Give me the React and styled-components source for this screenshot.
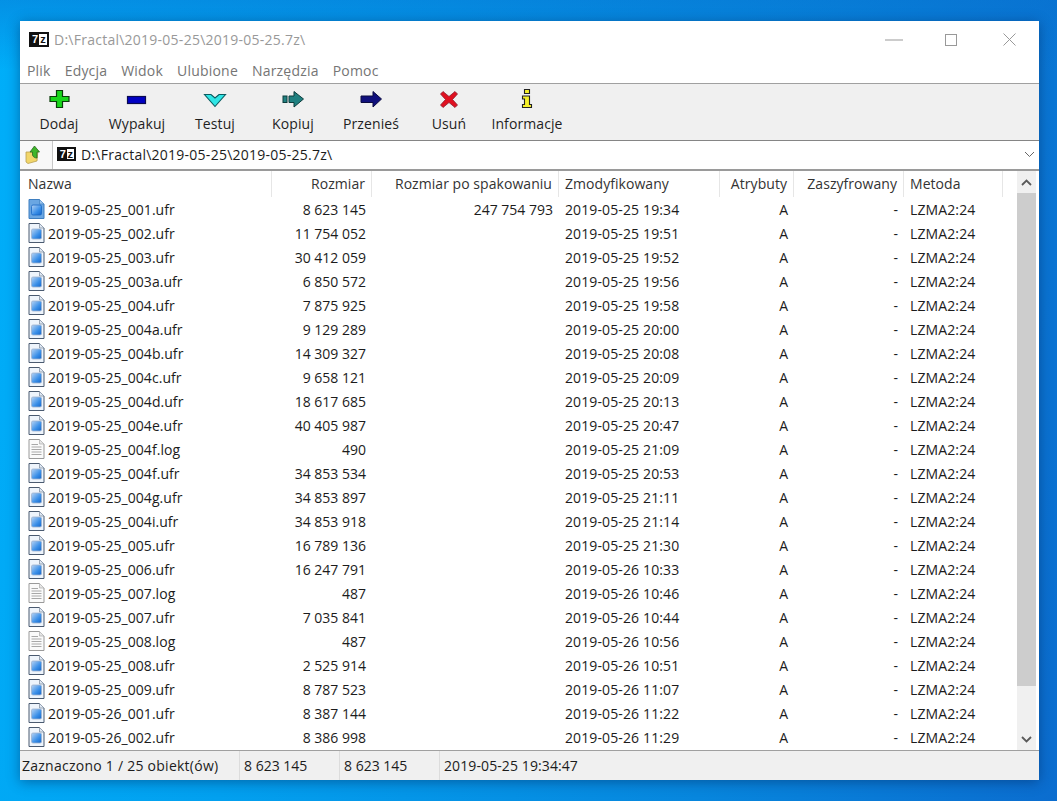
import React from 'react';
import styled, { createGlobalStyle } from 'styled-components';

const GlobalStyle = createGlobalStyle`
  html, body {
    margin: 0;
    padding: 0;
  }
  body {
    font-family: "Open Sans", "Noto Sans", sans-serif;
    font-size: 14px;
    color: #1c1c1c;
  }
`;

const COLUMNS = '252px 100px 187px 161px 74px 110px 99px 14px';

const Desktop = styled.div`
  box-sizing: border-box;
  width: 1057px;
  height: 801px;
  overflow: hidden;
  padding: 21px 18px 21px 20px;
  background:
    linear-gradient(180deg, rgba(8, 110, 205, 0.45) 0, rgba(8, 110, 205, 0) 70px),
    linear-gradient(100deg, #00aef9 0%, #02a0ef 30%, #0786dd 70%, #0b6dcf 100%);
`;

const Window = styled.div`
  display: flex;
  flex-direction: column;
  height: 759px;
  background: #fff;
  box-shadow: 0 2px 12px rgba(0, 30, 80, 0.45);
`;

const TitleBar = styled.div`
  display: flex;
  align-items: center;
  height: 37px;
  padding-left: 9px;
  color: #999;
`;

const Title = styled.span`
  margin-left: 5px;
  flex: 1;
  letter-spacing: 0.25px;
`;

const LogoBox = styled.span`
  box-sizing: border-box;
  display: inline-flex;
  flex: none;
  width: ${p => (p.$small ? '19px' : '20px')};
  height: ${p => (p.$small ? '14px' : '15px')};
  background: #fff;
  border: 2px solid #111;
  font-family: "Liberation Sans", sans-serif;
  font-size: 11px;
  font-weight: 700;
  line-height: 11px;
  color: #111;
`;

const LogoSeven = styled.span`
  width: 8px;
  background: #111;
  color: #fff;
  text-align: center;
`;

const LogoZed = styled.span`
  width: 8px;
  text-align: center;
`;

const WindowButton = styled.div`
  display: flex;
  align-items: center;
  justify-content: center;
  width: ${p => (p.$narrow ? '56px' : '58px')};
  height: 37px;
`;

const WindowButtons = styled.div`
  display: flex;
  margin-right: 1px;
`;

const MenuBar = styled.div`
  display: flex;
  align-items: center;
  gap: 14px;
  height: 25px;
  padding: 0 0 0 7px;
  color: #757575;
  letter-spacing: 0.2px;
  border-bottom: 1px solid #a0a0a0;
`;

const Toolbar = styled.div`
  display: flex;
  height: 56px;
  background: #f0f0f0;
  border-bottom: 1px solid #858585;
`;

const ToolButton = styled.div`
  display: flex;
  flex-direction: column;
  align-items: center;
  width: 78px;
  padding-top: 5px;
  color: #1f1f1f;
`;

const ToolIcon = styled.svg`
  display: block;
  width: 24px;
  height: 20px;
`;

const ToolLabel = styled.span`
  margin-top: 5px;
  line-height: 20px;
  letter-spacing: 0.1px;
`;

const AddressRow = styled.div`
  display: flex;
  align-items: stretch;
  height: 28px;
  border-bottom: 2px solid #9a9a9a;
  background: #f8f8f8;
`;

const UpButton = styled.div`
  box-sizing: border-box;
  display: flex;
  align-items: center;
  width: 32px;
  padding: 0 0 2px 5px;
`;

const AddressBox = styled.div`
  flex: 1;
  display: flex;
  align-items: center;
  gap: 5px;
  padding: 0 0 2px 4px;
  background: #fff;
  border-left: 1px solid #c8c8c8;
`;

const AddressText = styled.span`
  flex: 1;
  letter-spacing: 0.25px;
`;

const DropArrow = styled.svg`
  width: 11px;
  height: 7px;
  margin-right: 4px;
`;

const ListArea = styled.div`
  display: flex;
  height: 579px;
  overflow: hidden;
  padding-right: 3px;
`;

const ListBody = styled.div`
  flex: 1;
  min-width: 0;
`;

const HeaderRow = styled.div`
  display: grid;
  grid-template-columns: ${COLUMNS};
  height: 26px;
  color: #333;
`;

const HeaderCell = styled.div`
  box-sizing: border-box;
  display: flex;
  align-items: center;
  justify-content: ${p => (p.$right ? 'flex-end' : 'flex-start')};
  padding: 0 6px 2px 6px;
  border-right: 1px solid #e6e6e6;
  height: 26px;
  letter-spacing: 0.05px;
  white-space: nowrap;
  overflow: hidden;
  &:first-child {
    padding-left: 8px;
  }
`;

const Row = styled.div`
  display: grid;
  grid-template-columns: ${COLUMNS};
  height: 24px;
  align-items: center;
`;

const Cell = styled.div`
  padding: 0 6px;
  text-align: ${p => (p.$right ? 'right' : 'left')};
  letter-spacing: ${p => (p.$spaced ? '0.12px' : '0')};
  white-space: nowrap;
`;

const NameCell = styled.div`
  display: flex;
  align-items: center;
  gap: 3px;
  padding-left: 8px;
  letter-spacing: 0.05px;
  white-space: nowrap;
`;

const FileIcon = styled.svg`
  display: block;
  flex: none;
  width: 17px;
  height: 20px;
`;

const ScrollBar = styled.div`
  display: flex;
  flex-direction: column;
  width: 19px;
  background: #f0f0f0;
`;

const ScrollArrow = styled.div`
  display: flex;
  align-items: center;
  justify-content: center;
  height: 22px;
`;

const ScrollThumb = styled.div`
  height: 493px;
  background: #cdcdcd;
`;

const ScrollTrack = styled.div`
  flex: 1;
`;

const StatusBar = styled.div`
  display: flex;
  flex: 1;
  background: #f0f0f0;
  border-top: 1px solid #a0a0a0;
  align-items: stretch;
`;

const StatusCell = styled.div`
  box-sizing: border-box;
  display: flex;
  align-items: center;
  width: ${p => (p.$width ? `${p.$width}px` : 'auto')};
  padding-left: ${p => p.$pad}px;
  border-right: ${p => (p.$last ? 'none' : '1px solid #dcdcdc')};
  letter-spacing: ${p => p.$spacing || 0}px;
  white-space: nowrap;
`;

const Chevron = ({ up }) => (
  <svg width="11" height="7" viewBox="0 0 11 7">
    <path d={up ? 'M1 6L5.5 1.5L10 6' : 'M1 1L5.5 5.5L10 1'} fill="none" stroke="#5a5a5a" strokeWidth="1.8" />
  </svg>
);

const Logo = ({ small }) => (
  <LogoBox $small={small}>
    <LogoSeven>7</LogoSeven>
    <LogoZed>z</LogoZed>
  </LogoBox>
);

const AddIcon = () => (
  <ToolIcon viewBox="0 0 24 20">
    <path d="M9.5 1.5H15.5V7.5H22V12.5H15.5V18.5H9.5V12.5H3V7.5H9.5Z" fill="#19d61c" stroke="#0a3d0a" strokeWidth="1.2" />
  </ToolIcon>
);

const ExtractIcon = () => (
  <ToolIcon viewBox="0 0 24 20">
    <rect x="2.5" y="7.5" width="18" height="7" fill="#0000c4" stroke="#0a0a50" strokeWidth="1.2" />
  </ToolIcon>
);

const TestIcon = () => (
  <ToolIcon viewBox="0 0 24 20">
    <path d="M1.5 5.5H8L12 9L16 5.5H22.5L12 17.5Z" fill="#2fe6e6" stroke="#0b5c60" strokeWidth="1.1" />
  </ToolIcon>
);

const ArrowIcon = ({ fill, stroke, split }) => (
  <ToolIcon viewBox="0 0 24 20">
    {split && <rect x="2" y="7" width="4" height="6.5" fill={fill} stroke={stroke} />}
    <path
      d={split ? 'M8 7H13V2.5L22.5 10L13 18V13.5H8Z' : 'M2 7H14V2.5L22.5 10L14 18V13.5H2Z'}
      fill={fill}
      stroke={stroke}
    />
  </ToolIcon>
);

const DeleteIcon = () => (
  <ToolIcon viewBox="0 0 24 20">
    <path d="M6 2.5L12 7.5L18 2.5L20.5 5L15.5 10.5L20.5 16L18 18.5L12 13.5L6 18.5L3.5 16L8.5 10.5L3.5 5Z" fill="#e01020" stroke="#8a2030" strokeWidth="0.8" />
  </ToolIcon>
);

const InfoIcon = () => (
  <ToolIcon viewBox="0 0 24 20">
    <path d="M9.5 0.5H14.5V4.5H9.5ZM7.5 7H14.5V15.5H16.5V18.5H7.5V15.5H9.5V10H7.5Z" fill="#f5f02a" stroke="#222" strokeWidth="1.1" />
  </ToolIcon>
);

const UpIcon = () => (
  <svg width="16" height="19" viewBox="0 0 16 19">
    <path d="M1 7H6L13 5L12 16L3 18.5L1 17Z" fill="#f2d66a" stroke="#b8a050" strokeWidth="0.8" />
    <path d="M9.5 1L14.5 7H12V13C10 13 8 12 7.5 10V7H5Z" fill="#3fb52a" stroke="#2a6a20" strokeWidth="0.8" />
  </svg>
);

const PictureFile = ({ selected }) => (
  <FileIcon viewBox="0 0 17 20">
    <defs>
      <linearGradient id="pic" x1="0" y1="0" x2="1" y2="1">
        <stop offset="0" stopColor="#b8d4f4" />
        <stop offset="0.6" stopColor="#3a8fe8" />
        <stop offset="1" stopColor="#1565c8" />
      </linearGradient>
    </defs>
    <path d="M1 .5H11.5L16 5V19.5H1Z" fill={selected ? '#6aa6e2' : '#eef4fb'} stroke={selected ? '#3f7fc0' : '#4a5a70'} />
    <path d="M11.5 .5V5H16" fill={selected ? '#9cc4ec' : '#dfe8f3'} stroke={selected ? '#3f7fc0' : '#7a8798'} strokeWidth="0.7" />
    <rect x="3.5" y="6" width="10" height="10" rx="1.5" fill="url(#pic)" stroke={selected ? '#1a68c4' : '#9db2d0'} strokeWidth="0.8" />
  </FileIcon>
);

const LogFile = () => (
  <FileIcon viewBox="0 0 17 20">
    <path d="M1 .5H11.5L16 5V19.5H1Z" fill="#fafafa" stroke="#9a9a9a" />
    <path d="M11.5 .5V5H16" fill="#e6e6e6" stroke="#aaa" strokeWidth="0.7" />
    <path d="M3.5 5.5H10M3.5 8H13.5M3.5 10.5H13.5M3.5 13H13.5M3.5 15.5H13.5" stroke="#a8a8a8" strokeWidth="1" />
  </FileIcon>
);

const MENU = ['Plik', 'Edycja', 'Widok', 'Ulubione', 'Narzędzia', 'Pomoc'];

const TOOLS = [
  { label: 'Dodaj', icon: <AddIcon /> },
  { label: 'Wypakuj', icon: <ExtractIcon /> },
  { label: 'Testuj', icon: <TestIcon /> },
  { label: 'Kopiuj', icon: <ArrowIcon split fill="#1f8080" stroke="#0c3c3c" /> },
  { label: 'Przenieś', icon: <ArrowIcon fill="#10107c" stroke="#0a0a40" /> },
  { label: 'Usuń', icon: <DeleteIcon /> },
  { label: 'Informacje', icon: <InfoIcon /> },
];

const HEADERS = [
  { label: 'Nazwa' },
  { label: 'Rozmiar', right: true },
  { label: 'Rozmiar po spakowaniu', right: true },
  { label: 'Zmodyfikowany' },
  { label: 'Atrybuty', right: true },
  { label: 'Zaszyfrowany', right: true },
  { label: 'Metoda' },
];

const FILES = [
  ['2019-05-25_001.ufr', '8 623 145', '2019-05-25 19:34', '247 754 793'],
  ['2019-05-25_002.ufr', '11 754 052', '2019-05-25 19:51'],
  ['2019-05-25_003.ufr', '30 412 059', '2019-05-25 19:52'],
  ['2019-05-25_003a.ufr', '6 850 572', '2019-05-25 19:56'],
  ['2019-05-25_004.ufr', '7 875 925', '2019-05-25 19:58'],
  ['2019-05-25_004a.ufr', '9 129 289', '2019-05-25 20:00'],
  ['2019-05-25_004b.ufr', '14 309 327', '2019-05-25 20:08'],
  ['2019-05-25_004c.ufr', '9 658 121', '2019-05-25 20:09'],
  ['2019-05-25_004d.ufr', '18 617 685', '2019-05-25 20:13'],
  ['2019-05-25_004e.ufr', '40 405 987', '2019-05-25 20:47'],
  ['2019-05-25_004f.log', '490', '2019-05-25 21:09'],
  ['2019-05-25_004f.ufr', '34 853 534', '2019-05-25 20:53'],
  ['2019-05-25_004g.ufr', '34 853 897', '2019-05-25 21:11'],
  ['2019-05-25_004i.ufr', '34 853 918', '2019-05-25 21:14'],
  ['2019-05-25_005.ufr', '16 789 136', '2019-05-25 21:30'],
  ['2019-05-25_006.ufr', '16 247 791', '2019-05-26 10:33'],
  ['2019-05-25_007.log', '487', '2019-05-26 10:46'],
  ['2019-05-25_007.ufr', '7 035 841', '2019-05-26 10:44'],
  ['2019-05-25_008.log', '487', '2019-05-26 10:56'],
  ['2019-05-25_008.ufr', '2 525 914', '2019-05-26 10:51'],
  ['2019-05-25_009.ufr', '8 787 523', '2019-05-26 11:07'],
  ['2019-05-26_001.ufr', '8 387 144', '2019-05-26 11:22'],
  ['2019-05-26_002.ufr', '8 386 998', '2019-05-26 11:29'],
];

const App = () => {
  return (
    <Desktop>
      <GlobalStyle />
      <Window>
        <TitleBar>
          <Logo />
          <Title>D:\Fractal\2019-05-25\2019-05-25.7z\</Title>
          <WindowButtons>
            <WindowButton $narrow>
              <svg width="18" height="2" viewBox="0 0 18 2"><path d="M0 1H18" stroke="#999" /></svg>
            </WindowButton>
            <WindowButton>
              <svg width="12" height="12" viewBox="0 0 12 12"><rect x=".5" y=".5" width="11" height="11" fill="none" stroke="#999" /></svg>
            </WindowButton>
            <WindowButton>
              <svg width="13" height="13" viewBox="0 0 13 13"><path d="M.5 .5L12.5 12.5M12.5 .5L.5 12.5" stroke="#999" /></svg>
            </WindowButton>
          </WindowButtons>
        </TitleBar>
        <MenuBar>
          {MENU.map(item => <span key={item}>{item}</span>)}
        </MenuBar>
        <Toolbar>
          {TOOLS.map(tool => (
            <ToolButton key={tool.label}>
              {tool.icon}
              <ToolLabel>{tool.label}</ToolLabel>
            </ToolButton>
          ))}
        </Toolbar>
        <AddressRow>
          <UpButton><UpIcon /></UpButton>
          <AddressBox>
            <Logo small />
            <AddressText>D:\Fractal\2019-05-25\2019-05-25.7z\</AddressText>
            <DropArrow viewBox="0 0 11 7">
              <path d="M1 1L5.5 5.5L10 1" fill="none" stroke="#666" />
            </DropArrow>
          </AddressBox>
        </AddressRow>
        <ListArea>
          <ListBody>
            <HeaderRow>
              {HEADERS.map(col => (
                <HeaderCell key={col.label} $right={col.right}>{col.label}</HeaderCell>
              ))}
            </HeaderRow>
            {FILES.map(([name, size, date, packed], i) => (
              <Row key={name}>
                <NameCell>
                  {name.endsWith('.log') ? <LogFile /> : <PictureFile selected={i === 0} />}
                  {name}
                </NameCell>
                <Cell $right>{size}</Cell>
                <Cell $right>{packed}</Cell>
                <Cell $spaced>{date}</Cell>
                <Cell $right>A</Cell>
                <Cell $right>-</Cell>
                <Cell $spaced>LZMA2:24</Cell>
              </Row>
            ))}
          </ListBody>
          <ScrollBar>
            <ScrollArrow><Chevron up /></ScrollArrow>
            <ScrollThumb />
            <ScrollTrack />
            <ScrollArrow><Chevron /></ScrollArrow>
          </ScrollBar>
        </ListArea>
        <StatusBar>
          <StatusCell $width={220} $pad={2} $spacing={0.25}>Zaznaczono 1 / 25 obiekt(ów)</StatusCell>
          <StatusCell $width={100} $pad={4}>8 623 145</StatusCell>
          <StatusCell $width={100} $pad={4}>8 623 145</StatusCell>
          <StatusCell $pad={4} $spacing={0.1} $last>2019-05-25 19:34:47</StatusCell>
        </StatusBar>
      </Window>
    </Desktop>
  );
};

export default App;
